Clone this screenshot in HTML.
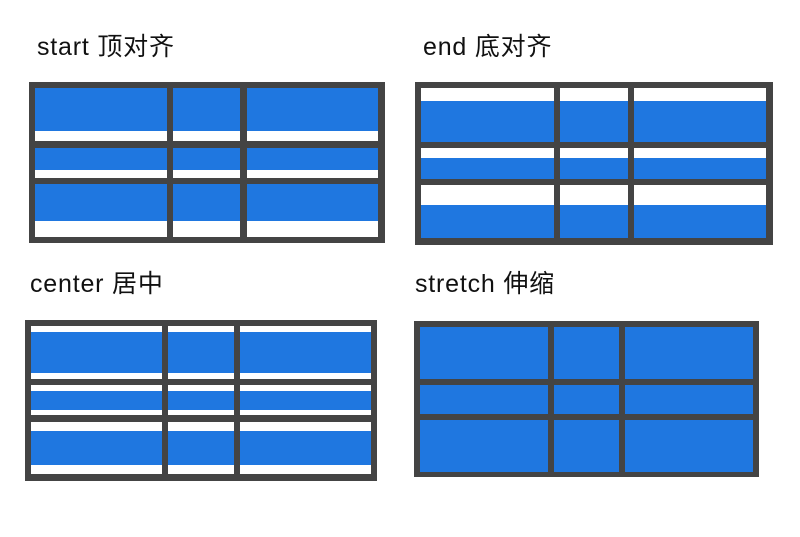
<!DOCTYPE html>
<html><head><meta charset="utf-8"><style>
body{margin:0;width:800px;height:537px;background:#fff;position:relative;overflow:hidden;font-family:"Liberation Sans","Noto Sans CJK SC",sans-serif}
.l{position:absolute;font-size:25px;color:#111;line-height:1;white-space:nowrap;letter-spacing:0.8px}
.g{position:absolute;background:#444}
.c{position:absolute;background:#fff}
.b{position:absolute;left:0;right:0;background:#1f77e0}
</style></head><body>
<div class="l" style="left:37px;top:35px">start 顶对齐</div>
<div class="l" style="left:423px;top:35px">end 底对齐</div>
<div class="l" style="left:30px;top:272px">center 居中</div>
<div class="l" style="left:415px;top:272px">stretch 伸缩</div>

<div class="g" style="left:29px;top:82px;width:356px;height:161px"></div>
<div class="c" style="left:35px;top:88px;width:132px;height:53px"><div class="b" style="top:0;height:43px"></div></div>
<div class="c" style="left:173px;top:88px;width:67px;height:53px"><div class="b" style="top:0;height:43px"></div></div>
<div class="c" style="left:247px;top:88px;width:131px;height:53px"><div class="b" style="top:0;height:43px"></div></div>
<div class="c" style="left:35px;top:148px;width:132px;height:30px"><div class="b" style="top:0;height:22px"></div></div>
<div class="c" style="left:173px;top:148px;width:67px;height:30px"><div class="b" style="top:0;height:22px"></div></div>
<div class="c" style="left:247px;top:148px;width:131px;height:30px"><div class="b" style="top:0;height:22px"></div></div>
<div class="c" style="left:35px;top:184px;width:132px;height:53px"><div class="b" style="top:0;height:37px"></div></div>
<div class="c" style="left:173px;top:184px;width:67px;height:53px"><div class="b" style="top:0;height:37px"></div></div>
<div class="c" style="left:247px;top:184px;width:131px;height:53px"><div class="b" style="top:0;height:37px"></div></div>

<div class="g" style="left:415px;top:82px;width:358px;height:163px"></div>
<div class="c" style="left:421px;top:88px;width:133px;height:54px"><div class="b" style="bottom:0;height:41px"></div></div>
<div class="c" style="left:560px;top:88px;width:68px;height:54px"><div class="b" style="bottom:0;height:41px"></div></div>
<div class="c" style="left:634px;top:88px;width:132px;height:54px"><div class="b" style="bottom:0;height:41px"></div></div>
<div class="c" style="left:421px;top:148px;width:133px;height:31px"><div class="b" style="bottom:0;height:21px"></div></div>
<div class="c" style="left:560px;top:148px;width:68px;height:31px"><div class="b" style="bottom:0;height:21px"></div></div>
<div class="c" style="left:634px;top:148px;width:132px;height:31px"><div class="b" style="bottom:0;height:21px"></div></div>
<div class="c" style="left:421px;top:185px;width:133px;height:53px"><div class="b" style="bottom:0;height:33px"></div></div>
<div class="c" style="left:560px;top:185px;width:68px;height:53px"><div class="b" style="bottom:0;height:33px"></div></div>
<div class="c" style="left:634px;top:185px;width:132px;height:53px"><div class="b" style="bottom:0;height:33px"></div></div>

<div class="g" style="left:25px;top:320px;width:352px;height:161px"></div>
<div class="c" style="left:31px;top:326px;width:131px;height:53px"><div class="b" style="top:6px;height:41px"></div></div>
<div class="c" style="left:168px;top:326px;width:66px;height:53px"><div class="b" style="top:6px;height:41px"></div></div>
<div class="c" style="left:240px;top:326px;width:131px;height:53px"><div class="b" style="top:6px;height:41px"></div></div>
<div class="c" style="left:31px;top:385px;width:131px;height:30px"><div class="b" style="top:6px;height:19px"></div></div>
<div class="c" style="left:168px;top:385px;width:66px;height:30px"><div class="b" style="top:6px;height:19px"></div></div>
<div class="c" style="left:240px;top:385px;width:131px;height:30px"><div class="b" style="top:6px;height:19px"></div></div>
<div class="c" style="left:31px;top:422px;width:131px;height:52px"><div class="b" style="top:9px;height:34px"></div></div>
<div class="c" style="left:168px;top:422px;width:66px;height:52px"><div class="b" style="top:9px;height:34px"></div></div>
<div class="c" style="left:240px;top:422px;width:131px;height:52px"><div class="b" style="top:9px;height:34px"></div></div>

<div class="g" style="left:414px;top:321px;width:345px;height:156px"></div>
<div class="c" style="left:420px;top:327px;width:128px;height:52px"><div class="b" style="top:0;bottom:0"></div></div>
<div class="c" style="left:554px;top:327px;width:65px;height:52px"><div class="b" style="top:0;bottom:0"></div></div>
<div class="c" style="left:625px;top:327px;width:128px;height:52px"><div class="b" style="top:0;bottom:0"></div></div>
<div class="c" style="left:420px;top:385px;width:128px;height:29px"><div class="b" style="top:0;bottom:0"></div></div>
<div class="c" style="left:554px;top:385px;width:65px;height:29px"><div class="b" style="top:0;bottom:0"></div></div>
<div class="c" style="left:625px;top:385px;width:128px;height:29px"><div class="b" style="top:0;bottom:0"></div></div>
<div class="c" style="left:420px;top:420px;width:128px;height:52px"><div class="b" style="top:0;bottom:0"></div></div>
<div class="c" style="left:554px;top:420px;width:65px;height:52px"><div class="b" style="top:0;bottom:0"></div></div>
<div class="c" style="left:625px;top:420px;width:128px;height:52px"><div class="b" style="top:0;bottom:0"></div></div>
</body></html>
